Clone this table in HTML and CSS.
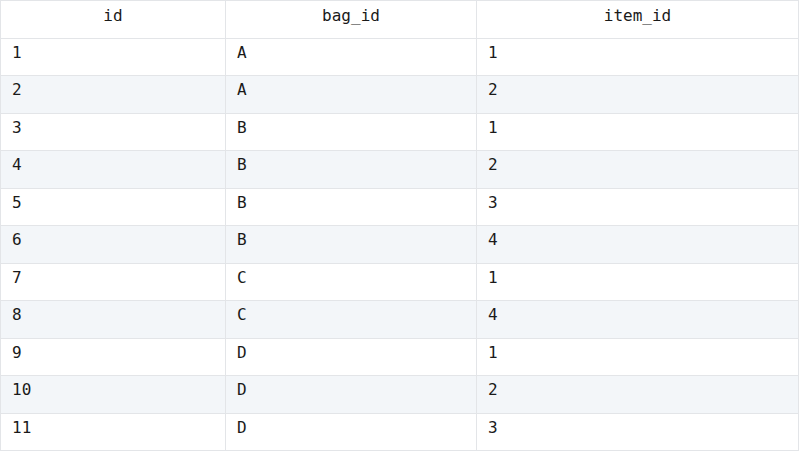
FILE: index.html
```html
<!DOCTYPE html>
<html>
<head>
<meta charset="utf-8">
<link rel="stylesheet" href="styles.css">
</head>
<body>
<table class="data">
  <colgroup>
    <col class="c1"><col class="c2"><col class="c3">
  </colgroup>
  <thead>
    <tr><th>id</th><th>bag_id</th><th>item_id</th></tr>
  </thead>
  <tbody>
    <tr><td>1</td><td>A</td><td>1</td></tr>
    <tr><td>2</td><td>A</td><td>2</td></tr>
    <tr><td>3</td><td>B</td><td>1</td></tr>
    <tr><td>4</td><td>B</td><td>2</td></tr>
    <tr><td>5</td><td>B</td><td>3</td></tr>
    <tr><td>6</td><td>B</td><td>4</td></tr>
    <tr><td>7</td><td>C</td><td>1</td></tr>
    <tr><td>8</td><td>C</td><td>4</td></tr>
    <tr><td>9</td><td>D</td><td>1</td></tr>
    <tr><td>10</td><td>D</td><td>2</td></tr>
    <tr><td>11</td><td>D</td><td>3</td></tr>
  </tbody>
</table>
</body>
</html>
```
FILE: styles.css
```css
html, body {
  margin: 0;
  padding: 0;
  background: #ffffff;
}
.data {
  border-collapse: collapse;
  table-layout: fixed;
  width: 798px;
  font-family: "DejaVu Sans Mono", monospace;
  font-size: 16px;
  color: #1a1a1a;
}
.c1 { width: 225px; }
.c2 { width: 251px; }
.c3 { width: 322px; }
.data tr {
  height: 37.5px;
}
.data th,
.data td {
  border: 1px solid #e3e5e8;
  padding: 4px 11px 0;
  vertical-align: top;
  line-height: 19px;
  text-align: left;
  font-weight: normal;
}
.data th {
  text-align: center;
  padding-top: 5px;
}
.data tbody tr:nth-child(even) td {
  background: #f3f6f9;
}
```
